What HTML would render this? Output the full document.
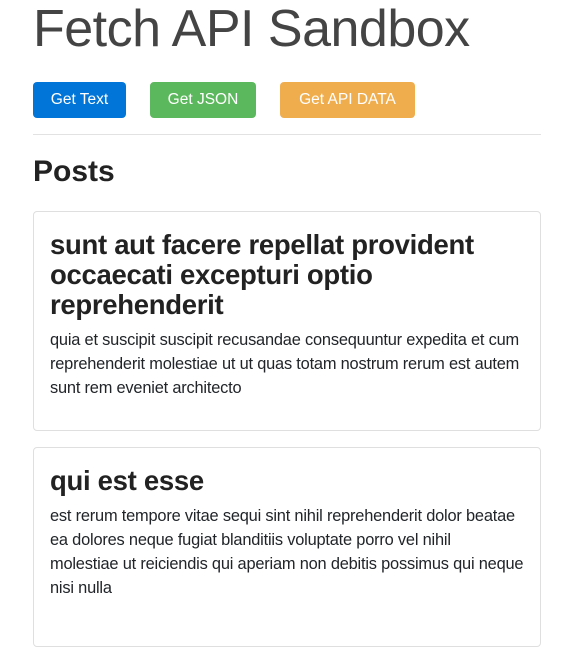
<!DOCTYPE html>
<html><head><style>
body{margin:0;background:#fff;font-family:"Liberation Sans",sans-serif;color:#212529;overflow:hidden}
h1{position:absolute;left:33px;top:-6px;margin:0;font-weight:300;font-size:52px;line-height:70px;color:#444;letter-spacing:-0.5px;white-space:nowrap}
.b{position:absolute;top:82px;height:36px;border-radius:4px;color:#fff;font-size:15.5px;line-height:36px;text-align:center}
hr{position:absolute;left:33px;top:134px;width:508px;margin:0;border:0;border-top:1px solid #e2e2e2}
.p{position:absolute;left:33px;top:150px;margin:0;font-size:30px;font-weight:bold;line-height:44px;color:#222}
.card{position:absolute;left:33px;width:508px;border:1px solid #dfdfdf;border-radius:4px;box-sizing:border-box;padding:16px}
.card h3{margin:0;font-size:27.5px;font-weight:bold;line-height:30px;white-space:nowrap;color:#222;letter-spacing:-0.3px}
.card p{margin:8px 0 0;font-size:16.4px;line-height:24px;white-space:nowrap;letter-spacing:-0.2px}
</style></head><body>
<h1>Fetch API Sandbox</h1>
<div class="b" style="left:33px;width:93px;background:#0275d8">Get Text</div>
<div class="b" style="left:150px;width:106px;background:#5cb85c">Get JSON</div>
<div class="b" style="left:280px;width:135px;background:#f0ad4e">Get API DATA</div>
<hr>
<div class="p">Posts</div>
<div class="card" style="top:211px;height:220px">
<h3 style="margin-top:2px">sunt aut facere repellat provident<br>occaecati excepturi optio<br>reprehenderit</h3>
<p>quia et suscipit suscipit recusandae consequuntur expedita et cum<br>reprehenderit molestiae ut ut quas totam nostrum rerum est autem<br>sunt rem eveniet architecto</p>
</div>
<div class="card" style="top:447px;height:200px">
<h3 style="margin-top:2px">qui est esse</h3>
<p>est rerum tempore vitae sequi sint nihil reprehenderit dolor beatae<br>ea dolores neque fugiat blanditiis voluptate porro vel nihil<br>molestiae ut reiciendis qui aperiam non debitis possimus qui neque<br>nisi nulla</p>
</div>
</body></html>
